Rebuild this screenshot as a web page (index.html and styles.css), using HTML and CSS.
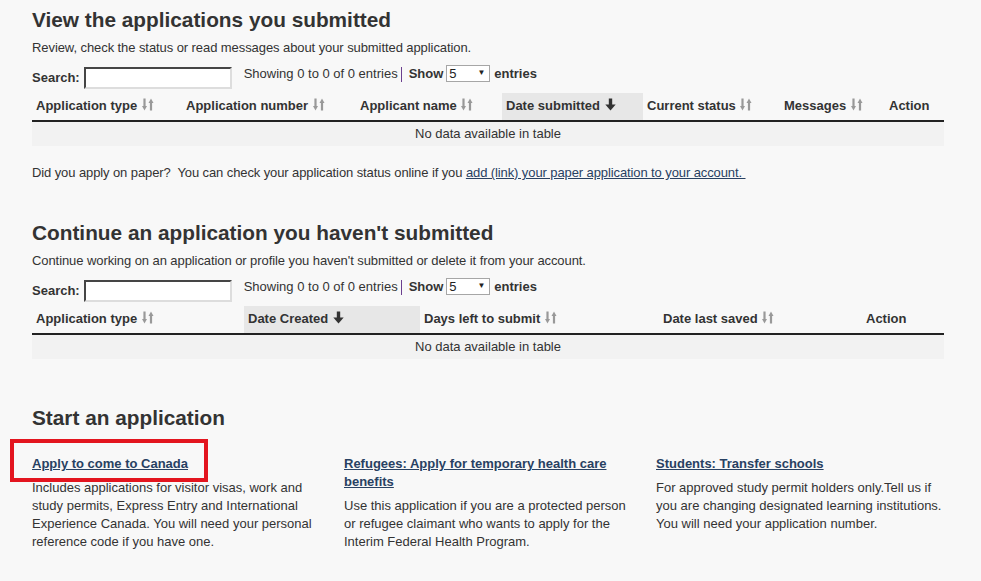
FILE: index.html
```html
<!DOCTYPE html>
<html lang="en">
<head>
  <meta charset="UTF-8">
  <title>My applications</title>
  <link rel="stylesheet" href="styles.css">
</head>
<body>
  <main class="page">

    <!-- Submitted applications -->
    <section class="block">
      <h2>View the applications you submitted</h2>
      <p class="lead">Review, check the status or read messages about your submitted application.</p>
      <div class="table-tools">
        <label class="search">Search: <input type="text"></label>
        <div class="info">
          <span class="count">Showing 0 to 0 of 0 entries</span>
          <span class="sep"></span>
          <b>Show</b>
          <span class="select"><select><option>5</option><option>10</option></select><span class="caret">&#9660;</span></span>
          <b>entries</b>
        </div>
      </div>
      <table class="data">
        <thead>
          <tr>
            <th style="width:150px">Application type <svg class="sort"><use href="#sort"/></svg></th>
            <th style="width:174px">Application number <svg class="sort"><use href="#sort"/></svg></th>
            <th style="width:146px">Applicant name <svg class="sort"><use href="#sort"/></svg></th>
            <th class="sorted" style="width:141px">Date submitted <svg class="sort-down"><use href="#down"/></svg></th>
            <th style="width:137px">Current status <svg class="sort"><use href="#sort"/></svg></th>
            <th style="width:105px">Messages <svg class="sort"><use href="#sort"/></svg></th>
            <th style="width:59px">Action</th>
          </tr>
        </thead>
        <tbody>
          <tr><td colspan="7" class="empty">No data available in table</td></tr>
        </tbody>
      </table>
      <p class="paper">Did you apply on paper?&nbsp; You can check your application status online if you <a href="#">add (link) your paper application to your account.&nbsp;</a></p>
    </section>

    <!-- Saved applications -->
    <section class="block">
      <h2>Continue an application you haven't submitted</h2>
      <p class="lead">Continue working on an application or profile you haven't submitted or delete it from your account.</p>
      <div class="table-tools">
        <label class="search">Search: <input type="text"></label>
        <div class="info">
          <span class="count">Showing 0 to 0 of 0 entries</span>
          <span class="sep"></span>
          <b>Show</b>
          <span class="select"><select><option>5</option><option>10</option></select><span class="caret">&#9660;</span></span>
          <b>entries</b>
        </div>
      </div>
      <table class="data">
        <thead>
          <tr>
            <th style="width:212px">Application type <svg class="sort"><use href="#sort"/></svg></th>
            <th class="sorted" style="width:176px">Date Created <svg class="sort-down"><use href="#down"/></svg></th>
            <th style="width:239px">Days left to submit <svg class="sort"><use href="#sort"/></svg></th>
            <th style="width:203px">Date last saved <svg class="sort"><use href="#sort"/></svg></th>
            <th style="width:82px">Action</th>
          </tr>
        </thead>
        <tbody>
          <tr><td colspan="5" class="empty">No data available in table</td></tr>
        </tbody>
      </table>
    </section>

    <!-- Start new -->
    <section class="block block-start">
      <h2>Start an application</h2>
      <div class="starts">
        <div class="start highlighted">
          <a href="#">Apply to come to Canada</a>
          <p>Includes applications for visitor visas, work and study permits, Express Entry and International Experience Canada. You will need your personal reference code if you have one.</p>
        </div>
        <div class="start">
          <a href="#">Refugees: Apply for temporary health care benefits</a>
          <p>Use this application if you are a protected person or refugee claimant who wants to apply for the Interim Federal Health Program.</p>
        </div>
        <div class="start">
          <a href="#">Students: Transfer schools</a>
          <p>For approved study permit holders only.Tell us if you are changing designated learning institutions. You will need your application number.</p>
        </div>
      </div>
    </section>
  </main>

  <svg width="0" height="0" style="position:absolute">
    <defs>
      <symbol id="sort" viewBox="0 0 12 13">
        <path d="M2.5 0.5v8.5" stroke="currentColor" stroke-width="2.2"/>
        <path d="M0 8h5l-2.5 4.5z" fill="currentColor"/>
        <path d="M9 12.5v-8.5" stroke="currentColor" stroke-width="2.2"/>
        <path d="M6.5 5h5l-2.5-4.5z" fill="currentColor"/>
      </symbol>
      <symbol id="down" viewBox="0 0 11 13">
        <path d="M5.5 0.5v7" stroke="currentColor" stroke-width="3.4"/>
        <path d="M0.3 6.5h10.4l-5.2 6z" fill="currentColor"/>
      </symbol>
    </defs>
  </svg>
</body>
</html>
```

FILE: styles.css
```css
/* Base */
body {
  margin: 0;
  background-color: #f8f8f8;
  color: #333;
  font-family: "Liberation Sans", Arial, sans-serif;
  font-size: 13px;
  line-height: 18px;
}

.page {
  width: 912px;
  padding: 0 32px;
}

h2 {
  margin: 8px 0 0;
  font-size: 20.8px;
  line-height: 24px;
  font-weight: bold;
}

.lead {
  margin: 7px 0 0;
  letter-spacing: -0.08px;
}

.block + .block {
  margin-top: 39px;
}

.block-start {
  margin-top: 47px !important;
}

/* Search + length bar */
.table-tools {
  display: flex;
  align-items: flex-start;
  margin-top: 8px;
  height: 28px;
}

.search {
  display: flex;
  align-items: center;
  margin-top: 2px;
  font-weight: bold;
  line-height: 22px;
}

.search input {
  width: 140px;
  height: 16px;
  margin-left: 4px;
  padding: 1px 2px;
  border: 2px inset #ddd;
  border-top-color: #999;
  border-left-color: #999;
  background: #fff;
}

.info {
  display: flex;
  align-items: center;
  margin-left: 12px;
}

.sep {
  width: 1px;
  height: 15px;
  margin: 0 7px 0 3px;
  background-color: #6b3f8f;
}

.select {
  position: relative;
  margin: 0 4px 0 3px;
}

.select select {
  appearance: none;
  -webkit-appearance: none;
  width: 44px;
  height: 17px;
  padding: 0 0 0 2px;
  border: 1px solid #a6a6a6;
  border-radius: 0;
  background: #fff;
  color: #222;
  font-family: inherit;
  font-size: 13px;
  line-height: 15px;
}

.select .caret {
  position: absolute;
  top: 3px;
  right: 5px;
  font-size: 8px;
  line-height: 10px;
  color: #222;
  pointer-events: none;
}

/* Tables */
.data {
  width: 912px;
  border-collapse: collapse;
  table-layout: fixed;
}

.data th {
  box-sizing: border-box;
  height: 28px;
  padding: 0 4px 2px;
  border-bottom: 2px solid #222;
  text-align: left;
  font-weight: bold;
  white-space: nowrap;
}

.data th.sorted {
  background-color: #e7e7e7;
}

.sort {
  width: 12px;
  height: 13px;
  margin-left: 1px;
  vertical-align: -1px;
  color: #999;
}

.sort-down {
  width: 11px;
  height: 13px;
  margin-left: 1px;
  vertical-align: -1px;
  color: #333;
}

.data td.empty {
  box-sizing: border-box;
  height: 25px;
  padding: 0 0 1px;
  line-height: 18px;
  background-color: #f2f2f2;
  text-align: center;
}

.paper {
  margin: 18px 0 0;
  letter-spacing: -0.1px;
}

a {
  color: #284162;
}

/* Start an application */
.starts {
  display: grid;
  grid-template-columns: repeat(3, 288px);
  column-gap: 24px;
  margin-top: 25px;
}

.start {
  position: relative;
}

.start a {
  font-weight: bold;
}

.start p {
  margin: 6px 0 0;
}

.highlighted::before {
  content: "";
  position: absolute;
  top: -16px;
  left: -22px;
  width: 190px;
  height: 35px;
  border: 4px solid #e3151f;
}
```
